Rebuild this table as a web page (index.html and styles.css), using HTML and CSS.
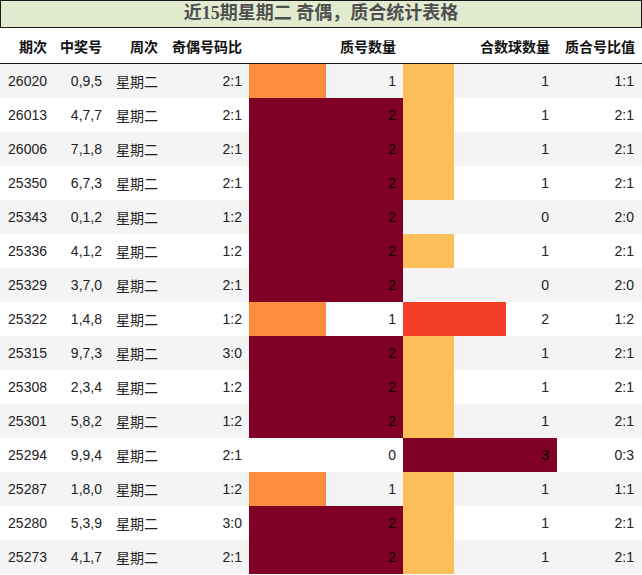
FILE: index.html
```html
<!DOCTYPE html>
<html lang="zh">
<head>
<meta charset="utf-8">
<link rel="stylesheet" href="styles.css">
</head>
<body>
<div class="title">近15期星期二 奇偶，质合统计表格</div>
<table class="stats">
<colgroup>
<col class="c1"><col class="c2"><col class="c3"><col class="c4"><col class="c5"><col class="c6"><col class="c7">
</colgroup>
<thead>
<tr><th>期次</th><th>中奖号</th><th>周次</th><th>奇偶号码比</th><th>质号数量</th><th>合数球数量</th><th>质合号比值</th></tr>
</thead>
<tbody>
<tr><td>26020</td><td>0,9,5</td><td>星期二</td><td>2:1</td><td class="q1">1</td><td class="h1">1</td><td>1:1</td></tr>
<tr><td>26013</td><td>4,7,7</td><td>星期二</td><td>2:1</td><td class="q2">2</td><td class="h1">1</td><td>2:1</td></tr>
<tr><td>26006</td><td>7,1,8</td><td>星期二</td><td>2:1</td><td class="q2">2</td><td class="h1">1</td><td>2:1</td></tr>
<tr><td>25350</td><td>6,7,3</td><td>星期二</td><td>2:1</td><td class="q2">2</td><td class="h1">1</td><td>2:1</td></tr>
<tr><td>25343</td><td>0,1,2</td><td>星期二</td><td>1:2</td><td class="q2">2</td><td class="h0">0</td><td>2:0</td></tr>
<tr><td>25336</td><td>4,1,2</td><td>星期二</td><td>1:2</td><td class="q2">2</td><td class="h1">1</td><td>2:1</td></tr>
<tr><td>25329</td><td>3,7,0</td><td>星期二</td><td>2:1</td><td class="q2">2</td><td class="h0">0</td><td>2:0</td></tr>
<tr><td>25322</td><td>1,4,8</td><td>星期二</td><td>1:2</td><td class="q1">1</td><td class="h2">2</td><td>1:2</td></tr>
<tr><td>25315</td><td>9,7,3</td><td>星期二</td><td>3:0</td><td class="q2">2</td><td class="h1">1</td><td>2:1</td></tr>
<tr><td>25308</td><td>2,3,4</td><td>星期二</td><td>1:2</td><td class="q2">2</td><td class="h1">1</td><td>2:1</td></tr>
<tr><td>25301</td><td>5,8,2</td><td>星期二</td><td>1:2</td><td class="q2">2</td><td class="h1">1</td><td>2:1</td></tr>
<tr><td>25294</td><td>9,9,4</td><td>星期二</td><td>2:1</td><td class="q0">0</td><td class="h3">3</td><td>0:3</td></tr>
<tr><td>25287</td><td>1,8,0</td><td>星期二</td><td>1:2</td><td class="q1">1</td><td class="h1">1</td><td>1:1</td></tr>
<tr><td>25280</td><td>5,3,9</td><td>星期二</td><td>3:0</td><td class="q2">2</td><td class="h1">1</td><td>2:1</td></tr>
<tr><td>25273</td><td>4,1,7</td><td>星期二</td><td>2:1</td><td class="q2">2</td><td class="h1">1</td><td>2:1</td></tr>
</tbody>
</table>
</body>
</html>
```
FILE: styles.css
```css
html, body {
  margin: 0;
  padding: 0;
  background: #ffffff;
}
body {
  width: 642px;
  font-family: "Liberation Sans", "Noto Sans CJK SC", sans-serif;
}
.title {
  box-sizing: border-box;
  width: 642px;
  height: 28px;
  border: 1px solid #1a1a1a;
  background: #e2ebcf;
  color: #4f4f4f;
  font-family: "Liberation Serif", "Noto Sans CJK SC", serif;
  font-weight: bold;
  font-size: 18px;
  line-height: 25px;
  text-align: center;
}
.stats {
  width: 642px;
  border-collapse: collapse;
  table-layout: fixed;
  font-size: 14px;
}
.c1 { width: 54px; }
.c2 { width: 55px; }
.c3 { width: 56px; }
.c4 { width: 84px; }
.c5 { width: 154px; }
.c6 { width: 154px; }
.c7 { width: 85px; }
.stats th {
  height: 35px;
  padding: 0 7px 0 0;
  text-align: right;
  font-weight: bold;
  color: #111;
  border-bottom: 1px solid #1a1a1a;
  white-space: nowrap;
}
.stats td {
  height: 34px;
  padding: 0 7px 0 0;
  text-align: right;
  color: #222;
  white-space: nowrap;
}
.stats td:nth-child(6),
.stats td:nth-child(7) {
  padding-right: 8px;
}
.stats tbody tr:nth-child(odd) { background: #f4f4f4; }
.stats tbody tr:nth-child(even) { background: #ffffff; }
.q1, .q2, .h1, .h2, .h3 {
  background-repeat: no-repeat;
  background-position: left top;
}
.q1 { background-image: linear-gradient(#fd8d3c, #fd8d3c); background-size: 77px 100%; }
.q2 { background-image: linear-gradient(#800026, #800026); background-size: 100% 100%; }
.stats td.q2, .stats td.h3 { color: #000; }
.h1 { background-image: linear-gradient(#febe5a, #febe5a); background-size: 51px 100%; }
.h2 { background-image: linear-gradient(#f43e25, #f43e25); background-size: 103px 100%; }
.h3 { background-image: linear-gradient(#800026, #800026); background-size: 100% 100%; }
```
